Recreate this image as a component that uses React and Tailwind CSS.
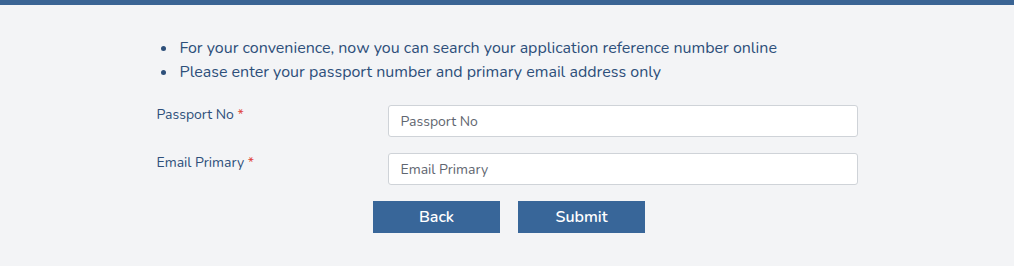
export default function App() {
  return (
    <div className="min-h-[266px] w-full bg-[#f3f4f6]" style={{ fontFamily: 'Nunito, Lato, "Noto Sans", sans-serif' }}>
      <div className="h-[5px] bg-[#3a6494]" />
      <div className="mx-auto w-[701px] pt-[31px]">
        <ul className="pl-[4px] text-[16px] leading-[24px] text-[#2d4f7a]">
          <li className="flex items-center">
            <span className="mr-[14px] inline-block h-[5px] w-[5px] rounded-full bg-[#2d4f7a]" />
            For your convenience, now you can search your application reference number online
          </li>
          <li className="flex items-center">
            <span className="mr-[14px] inline-block h-[5px] w-[5px] rounded-full bg-[#2d4f7a]" />
            Please enter your passport number and primary email address only
          </li>
        </ul>
        <div className="mt-[21px] flex flex-col gap-[16px]">
          <div className="flex">
            <label className="w-[231px] pt-[1px] text-[14px] leading-[18px] text-[#2d4f7a]">
              Passport No <span className="text-[#e0453a]">*</span>
            </label>
            <input
              className="h-[32px] w-[470px] rounded-[3px] border border-[#cfd3d8] bg-white px-[12px] text-[14px] text-[#555] outline-none placeholder:text-[#5f6670]"
              placeholder="Passport No"
            />
          </div>
          <div className="flex">
            <label className="w-[231px] pt-[1px] text-[14px] leading-[18px] text-[#2d4f7a]">
              Email Primary <span className="text-[#e0453a]">*</span>
            </label>
            <input
              className="h-[32px] w-[470px] rounded-[3px] border border-[#cfd3d8] bg-white px-[12px] text-[14px] text-[#555] outline-none placeholder:text-[#5f6670]"
              placeholder="Email Primary"
            />
          </div>
        </div>
        <div className="mt-[16px] flex justify-center gap-[18px] pl-[4px]">
          <button className="h-[32px] w-[127px] bg-[#386699] text-[16px] font-semibold text-white">Back</button>
          <button className="h-[32px] w-[127px] bg-[#386699] text-[16px] font-semibold text-white">Submit</button>
        </div>
      </div>
    </div>
  );
}
